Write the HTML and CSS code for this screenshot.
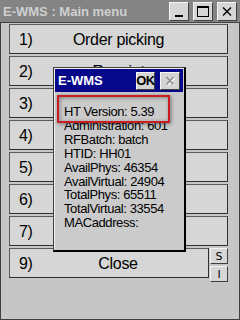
FILE: index.html
```html
<!DOCTYPE html>
<html lang="en">
<head>
    <meta charset="UTF-8">
    <meta name="viewport" content="width=device-width, initial-scale=1.0">
    <title>E-WMS : Main menu</title>
    <link rel="stylesheet" href="styles.css">
</head>
<body>
    <div class="screen">
        <div class="titlebar">
            <span class="title">E-WMS : Main menu</span>
            <div class="caption-btns">
                <button class="cap-btn" aria-label="Minimize">
                    <svg viewBox="0 0 18 17" width="18" height="17"><rect x="5" y="12" width="8" height="2" fill="#000"/></svg>
                </button>
                <button class="cap-btn" aria-label="Maximize">
                    <svg viewBox="0 0 18 17" width="18" height="17"><rect x="3.5" y="3.5" width="11" height="10" fill="none" stroke="#000"/><rect x="3" y="3" width="12" height="2" fill="#000"/></svg>
                </button>
                <button class="cap-btn" aria-label="Close">
                    <svg viewBox="0 0 18 17" width="18" height="17"><path d="M5 4.5l8 8M13 4.5l-8 8" stroke="#000" stroke-width="1.4"/></svg>
                </button>
            </div>
        </div>

        <div class="client">
            <div class="menu">
                <button class="menu-btn"><span class="num">1)</span><span class="label">Order picking</span></button>
                <button class="menu-btn"><span class="num">2)</span><span class="label">Receipt</span></button>
                <!-- labels 3-7 sit under the popup -->
                <button class="menu-btn"><span class="num">3)</span><span class="label"></span></button>
                <button class="menu-btn"><span class="num">4)</span><span class="label"></span></button>
                <button class="menu-btn"><span class="num">5)</span><span class="label"></span></button>
                <button class="menu-btn"><span class="num">6)</span><span class="label"></span></button>
                <button class="menu-btn"><span class="num">7)</span><span class="label"></span></button>
                <div class="last-row">
                    <button class="menu-btn close-btn"><span class="num">9)</span><span class="label">Close</span></button>
                    <div class="side-btns">
                        <button class="mini-btn">S</button>
                        <button class="mini-btn">I</button>
                    </div>
                </div>
            </div>

            <!-- info popup -->
            <div class="dialog">
                <div class="dialog-bar">
                    <span class="dialog-title">E-WMS</span>
                    <button class="ok-btn">OK</button>
                    <button class="x-btn" disabled aria-label="Close">
                        <svg viewBox="0 0 18 16" width="18" height="16"><path d="M5.5 4l7 7.5M12.5 4l-7 7.5" stroke="#fff" stroke-width="1.6" transform="translate(1 1)"/><path d="M5.5 4l7 7.5M12.5 4l-7 7.5" stroke="#8c8c8c" stroke-width="1.6"/></svg>
                    </button>
                </div>
                <div class="dialog-body">
                    <p>HT Version: 5.39</p>
                    <p>Administration: 601</p>
                    <p>RFBatch: batch</p>
                    <p>HTID: HH01</p>
                    <p>AvailPhys: 46354</p>
                    <p>AvailVirtual: 24904</p>
                    <p>TotalPhys: 65511</p>
                    <p>TotalVirtual: 33554</p>
                    <p>MACaddress:</p>
                </div>
                <div class="highlight"></div>
            </div>
        </div>
    </div>
</body>
</html>
```

FILE: styles.css
```css
:root {
    --face: #d6d6d6;
    --bg: #c6c6c6;
    --edge: #404040;
    --title-bg: #848484;
    --title-text: #cfcfcf;
    --dialog-blue: #08088a;
    --mark-red: #c81e22;
}
* { box-sizing: border-box; }
body {
    margin: 0;
    font-family: 'Liberation Sans', Arial, sans-serif;
    background: var(--bg);
}
button {
    font-family: inherit;
    padding: 0;
    color: #000;
}
.screen {
    width: 240px;
    height: 320px;
    position: relative;
    background: var(--bg);
    overflow: hidden;
}

/* window caption */
.titlebar {
    height: 23px;
    background: var(--title-bg);
    border-bottom: 1px solid var(--edge);
    display: flex;
    align-items: center;
    justify-content: space-between;
    padding: 0 3px 0 3px;
}
.title {
    color: var(--title-text);
    font-weight: 700;
    font-size: 13px;
}
.caption-btns { display: flex; gap: 4px; margin-top: 1px; }
.cap-btn {
    width: 20px;
    height: 19px;
    background: var(--face);
    border: 1px solid;
    border-color: #f4f4f4 var(--edge) var(--edge) #f4f4f4;
    display: flex;
    align-items: center;
    justify-content: center;
}

/* main menu */
.client {
    height: 297px;
    border: 1px solid var(--edge);
    border-top: 0;
}
.menu {
    display: flex;
    flex-direction: column;
    gap: 2px;
    padding: 1px 0 0 8px;
    width: 227px;
}
.menu-btn {
    height: 30px;
    width: 100%;
    background: var(--face);
    border: 1px solid;
    border-color: #5a5a5a #303030 #303030 #5a5a5a;
    display: grid;
    grid-template-columns: 48px 1fr 48px;
    align-items: center;
    font-size: 16px;
    letter-spacing: -0.3px;
    padding-top: 1px;
}
.menu-btn .num { padding-left: 9px; text-align: left; }
.menu-btn .label { text-align: center; white-space: nowrap; }
.last-row { display: flex; gap: 1px; }
.close-btn { width: 200px; grid-template-columns: 48px 1fr 30px; }
.side-btns { display: flex; flex-direction: column; gap: 2px; }
.mini-btn {
    width: 18px;
    height: 16px;
    background: var(--face);
    border: 1px solid;
    border-color: #f4f4f4 var(--edge) var(--edge) #f4f4f4;
    font-family: 'DejaVu Sans', sans-serif;
    font-size: 11px;
    line-height: 13px;
}

/* info dialog */
.dialog {
    position: absolute;
    left: 53px;
    top: 67px;
    width: 133px;
    height: 185px;
    background: #cbcbcb;
    border: 1px solid var(--edge);
    border-right: 2px solid #000;
    border-bottom: 2px solid #000;
    box-shadow: inset 1px 1px 0 #f0f0f0;
    padding: 1px 1px 0 1px;
}
.dialog-bar {
    height: 23px;
    background: var(--dialog-blue);
    display: flex;
    align-items: center;
    padding: 0 3px;
    gap: 5px;
}
.dialog-title {
    color: #fff;
    font-weight: 700;
    font-size: 13px;
    flex: 1;
}
.ok-btn, .x-btn {
    height: 18px;
    background: #d4d4d4;
    border: 1px solid;
    border-color: #f4f4f4 var(--edge) var(--edge) #f4f4f4;
    display: flex;
    align-items: center;
    justify-content: center;
}
.ok-btn { width: 19px; font-weight: 700; font-size: 13px; letter-spacing: -0.5px; }
.x-btn { width: 20px; }
.dialog-body {
    padding: 13px 0 0 9px;
    font-size: 13px;
    line-height: 13.9px;
    letter-spacing: -0.4px;
}
.dialog-body p { margin: 0; white-space: nowrap; }
.highlight {
    position: absolute;
    left: 3px;
    top: 27px;
    width: 113px;
    height: 28px;
    border: 2px solid var(--mark-red);
    box-shadow: 1px 1px 4px rgba(0, 0, 0, 0.45), inset 1px 1px 4px rgba(0, 0, 0, 0.35);
}
```
